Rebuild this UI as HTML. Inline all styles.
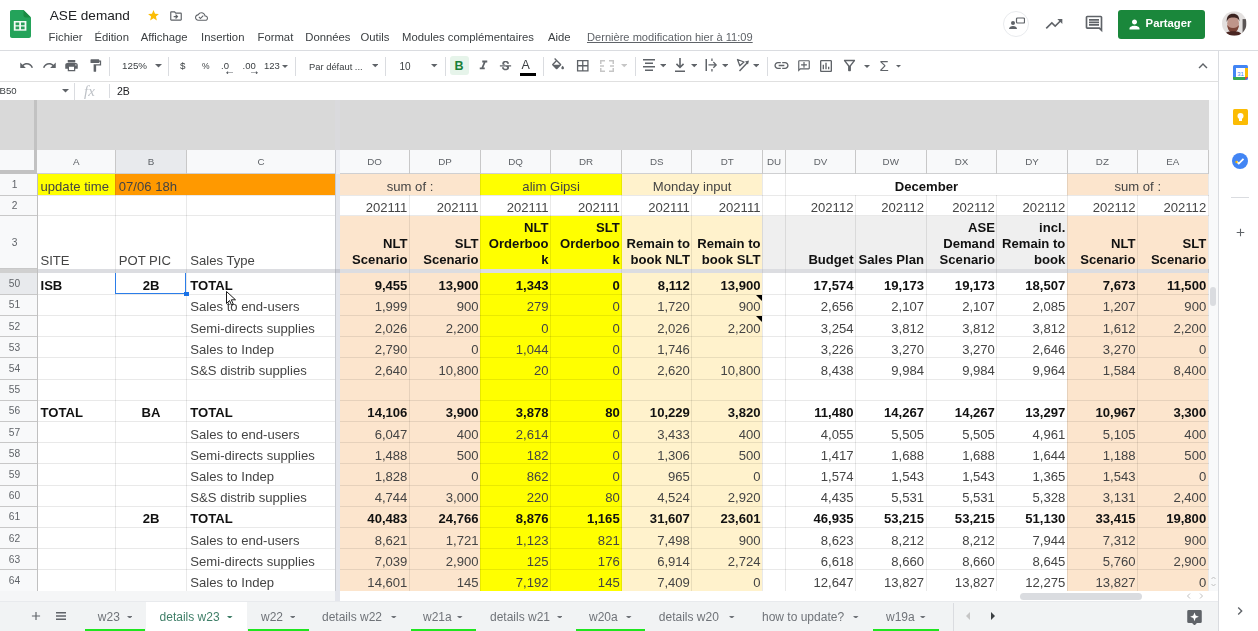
<!DOCTYPE html>
<html><head><meta charset="utf-8"><style>
html,body{margin:0;padding:0;}
body{filter:blur(0.5px);width:1258px;height:631px;overflow:hidden;position:relative;background:#fff;font-family:"Liberation Sans", sans-serif;}
.t{position:absolute;white-space:nowrap;}
.r{position:absolute;display:block;}
</style></head><body>
<svg class="r" style="left:10.00px;top:9.50px;" width="21" height="28" viewBox="0 0 21 28"><path d="M0 2C0 .9.9 0 2 0h11.5L21 7.5V26c0 1.1-.9 2-2 2H2c-1.1 0-2-.9-2-2z" fill="#24a35a"/><path d="M13.5 0L21 7.5h-5.5c-1.1 0-2-.9-2-2z" fill="#1b8a43"/><path d="M3.8 11h12.6v9.7H3.8z" fill="#f4fbf6"/><path d="M5.6 12.6h3.6v2.6H5.6zM11 12.6h3.6v2.6H11zM5.6 16.6h3.6v2.6H5.6zM11 16.6h3.6v2.6H11z" fill="#2a9d5a"/></svg>
<div class="t" style="left:49.80px;top:9.49px;font-size:13.6px;line-height:13.6px;color:#202124;font-weight:normal;">ASE demand</div>
<svg class="r" style="left:147.00px;top:9.00px;" width="13" height="13" viewBox="0 0 24 24"><path d="M12 17.27L18.18 21l-1.64-7.03L22 9.24l-7.19-.61L12 2 9.19 8.63 2 9.24l5.46 4.73L5.82 21z" fill="#fbbc04"/></svg>
<svg class="r" style="left:169.00px;top:9.00px;" width="14" height="14" viewBox="0 0 24 24"><path d="M20 6h-8l-2-2H4c-1.1 0-2 .9-2 2v12c0 1.1.9 2 2 2h16c1.1 0 2-.9 2-2V8c0-1.1-.9-2-2-2zm0 12H4V6h5.17l2 2H20v10zm-7.84-6H8v2h4.16l-1.59 1.59L11.99 17 16 13l-4.01-4-1.41 1.41z" fill="#5f6368"/></svg>
<svg class="r" style="left:194.50px;top:9.50px;" width="13" height="13" viewBox="0 0 24 24"><path d="M19.35 10.04C18.67 6.59 15.64 4 12 4 9.11 4 6.6 5.64 5.35 8.04 2.34 8.36 0 10.91 0 14c0 3.31 2.69 6 6 6h13c2.76 0 5-2.24 5-5 0-2.64-2.05-4.78-4.65-4.96zM19 18H6c-2.21 0-4-1.79-4-4 0-2.05 1.53-3.76 3.56-3.97l1.07-.11.5-.95C8.08 7.14 9.94 6 12 6c2.62 0 4.88 1.86 5.39 4.43l.3 1.5 1.53.11c1.56.1 2.78 1.41 2.78 2.96 0 1.65-1.35 3-3 3zm-9-3.82l-2.09-2.09L6.5 13.5 10 17l6.01-6.01-1.41-1.41z" fill="#5f6368"/></svg>
<div class="t" style="left:48.60px;top:32.03px;font-size:11.3px;line-height:11.3px;color:#3c4043;font-weight:normal;">Fichier</div>
<div class="t" style="left:94.40px;top:32.03px;font-size:11.3px;line-height:11.3px;color:#3c4043;font-weight:normal;">Édition</div>
<div class="t" style="left:140.70px;top:32.03px;font-size:11.3px;line-height:11.3px;color:#3c4043;font-weight:normal;">Affichage</div>
<div class="t" style="left:201.10px;top:32.03px;font-size:11.3px;line-height:11.3px;color:#3c4043;font-weight:normal;">Insertion</div>
<div class="t" style="left:257.50px;top:32.03px;font-size:11.3px;line-height:11.3px;color:#3c4043;font-weight:normal;">Format</div>
<div class="t" style="left:305.30px;top:32.03px;font-size:11.3px;line-height:11.3px;color:#3c4043;font-weight:normal;">Données</div>
<div class="t" style="left:360.50px;top:32.03px;font-size:11.3px;line-height:11.3px;color:#3c4043;font-weight:normal;">Outils</div>
<div class="t" style="left:402.00px;top:32.03px;font-size:11.3px;line-height:11.3px;color:#3c4043;font-weight:normal;">Modules complémentaires</div>
<div class="t" style="left:548.00px;top:32.03px;font-size:11.3px;line-height:11.3px;color:#3c4043;font-weight:normal;">Aide</div>
<div class="t" style="left:587.00px;top:32.20px;font-size:11.1px;line-height:11.1px;color:#5f6368;font-weight:normal;text-decoration:underline;">Dernière modification hier à 11:09</div>
<div class="r" style="left:1003px;top:10.5px;width:26px;height:26px;border-radius:50%;border:1px solid #e8eaed;box-sizing:border-box"></div>
<svg class="r" style="left:1009.00px;top:17.00px;" width="16" height="13" viewBox="0 0 16 13"><circle cx="4" cy="6" r="2" fill="#5f6368"/><path d="M0 12c0-2 2-3 4-3s4 1 4 3z" fill="#5f6368"/><rect x="7.5" y="1" width="8" height="5" rx="1" fill="none" stroke="#5f6368" stroke-width="1.2"/></svg>
<svg class="r" style="left:1044.00px;top:14.00px;" width="20" height="20" viewBox="0 0 24 24"><path d="M16 6l2.29 2.29-4.88 4.88-4-4L2 16.59 3.41 18l6-6 4 4 6.3-6.29L22 12V6z" fill="#5f6368"/></svg>
<svg class="r" style="left:1084.00px;top:14.00px;" width="20" height="20" viewBox="0 0 24 24"><path d="M21.99 4c0-1.1-.89-2-1.99-2H4c-1.1 0-2 .9-2 2v12c0 1.1.9 2 2 2h14l4 4-.01-18zM20 4v13.17L18.83 16H4V4h16zM6 12h12v2H6zm0-3h12v2H6zm0-3h12v2H6z" fill="#5f6368"/></svg>
<div class="r" style="left:1118.4px;top:10.2px;width:86.3px;height:28.6px;border-radius:4px;background:#1a873b;border-radius:3px"></div>
<svg class="r" style="left:1127.00px;top:17.00px;" width="15" height="15" viewBox="0 0 24 24"><path d="M12 12c2.21 0 4-1.79 4-4s-1.79-4-4-4-4 1.79-4 4 1.79 4 4 4zm0 2c-2.67 0-8 1.34-8 4v2h16v-2c0-2.66-5.33-4-8-4z" fill="#fff"/></svg>
<div class="t" style="left:1145.60px;top:18.43px;font-size:11.3px;line-height:11.3px;color:#ffffff;font-weight:bold;">Partager</div>
<svg class="r" style="left:1222.20px;top:11.00px;" width="24.5" height="25" viewBox="0 0 25 25"><defs><clipPath id="av"><circle cx="12.5" cy="12.5" r="12.5"/></clipPath></defs><g clip-path="url(#av)"><rect width="25" height="25" fill="#e3e0df"/><rect x="21" y="8" width="4" height="14" fill="#5b5555"/><ellipse cx="11.3" cy="12.5" rx="6" ry="8.5" fill="#bf958a"/><path d="M4.8 11c-.3-6 2.5-8.5 6.5-8.5s6.5 2 6.5 8c-.8-2.5-2.5-4-6.5-4S5.8 8 4.8 11z" fill="#3b2320"/><path d="M5.3 14c.5 5 3 8 6 8s5.5-3 6-8c-1.5 2-3 3-6 3s-4.5-1-6-3z" fill="#7a4438"/><path d="M2 25c1-3 4-4.5 9.5-4.5S19.5 22 21 25z" fill="#4a2622"/></g></svg>
<div class="r" style="left:0.00px;top:50.00px;width:1258.00px;height:1.00px;background:#dadce0;"></div>
<svg class="r" style="left:19.00px;top:58.00px;" width="15" height="15" viewBox="0 0 24 24"><path d="M12.5 8c-2.65 0-5.05.99-6.9 2.6L2 7v9h9l-3.62-3.62c1.39-1.16 3.16-1.88 5.12-1.88 3.54 0 6.55 2.31 7.6 5.5l2.37-.78C21.08 11.03 17.15 8 12.5 8z" fill="#5f6368"/></svg>
<svg class="r" style="left:42.00px;top:58.00px;" width="15" height="15" viewBox="0 0 24 24"><path d="M18.4 10.6C16.55 8.99 14.15 8 11.5 8c-4.65 0-8.58 3.03-9.96 7.22L3.9 16c1.05-3.19 4.05-5.5 7.6-5.5 1.95 0 3.73.72 5.12 1.88L13 16h9V7l-3.6 3.6z" fill="#5f6368"/></svg>
<svg class="r" style="left:64.00px;top:58.00px;" width="15" height="15" viewBox="0 0 24 24"><path d="M19 8H5c-1.66 0-3 1.34-3 3v6h4v4h12v-4h4v-6c0-1.66-1.34-3-3-3zm-3 11H8v-5h8v5zm3-7c-.55 0-1-.45-1-1s.45-1 1-1 1 .45 1 1-.45 1-1 1zm-1-9H6v4h12V3z" fill="#5f6368"/></svg>
<svg class="r" style="left:87.50px;top:58.00px;" width="15" height="15" viewBox="0 0 24 24"><path d="M18 4V3c0-.55-.45-1-1-1H5c-.55 0-1 .45-1 1v4c0 .55.45 1 1 1h12c.55 0 1-.45 1-1V6h1v4H9v11c0 .55.45 1 1 1h2c.55 0 1-.45 1-1v-9h8V4h-3z" fill="#5f6368"/></svg>
<div class="r" style="left:109.00px;top:57.00px;width:1.00px;height:19.00px;background:#dadce0;"></div>
<div class="t" style="left:122.00px;top:61.20px;font-size:9.8px;line-height:9.8px;color:#3c4043;font-weight:normal;">125%</div>
<svg class="r" style="left:154.50px;top:64.25px;" width="7" height="3.5" viewBox="0 0 10 5"><path d="M0 0l5 5 5-5z" fill="#5f6368"/></svg>
<div class="r" style="left:168.00px;top:57.00px;width:1.00px;height:19.00px;background:#dadce0;"></div>
<div class="t" style="left:180.00px;top:60.70px;font-size:9.8px;line-height:9.8px;color:#3c4043;font-weight:normal;">$</div>
<div class="t" style="left:202.00px;top:61.80px;font-size:8.5px;line-height:8.5px;color:#3c4043;font-weight:normal;">%</div>
<div class="t" style="left:221.00px;top:60.96px;font-size:9.5px;line-height:9.5px;color:#3c4043;font-weight:normal;">.0</div>
<svg class="r" style="left:226.00px;top:70.50px;" width="7" height="3.5" viewBox="0 0 10 5"><path d="M10 2H3V0L0 2.5 3 5V3h7z" fill="#5f6368"/></svg>
<div class="t" style="left:242.50px;top:60.96px;font-size:9.5px;line-height:9.5px;color:#3c4043;font-weight:normal;">.00</div>
<svg class="r" style="left:251.00px;top:70.50px;" width="7" height="3.5" viewBox="0 0 10 5"><path d="M0 2h7V0l3 2.5L7 5V3H0z" fill="#5f6368"/></svg>
<div class="t" style="left:264.00px;top:60.96px;font-size:9.5px;line-height:9.5px;color:#3c4043;font-weight:normal;">123</div>
<svg class="r" style="left:282.00px;top:64.50px;" width="6" height="3.0" viewBox="0 0 10 5"><path d="M0 0l5 5 5-5z" fill="#5f6368"/></svg>
<div class="r" style="left:295.00px;top:57.00px;width:1.00px;height:19.00px;background:#dadce0;"></div>
<div class="t" style="left:309.00px;top:62.04px;font-size:9.4px;line-height:9.4px;color:#3c4043;font-weight:normal;">Par défaut ...</div>
<svg class="r" style="left:371.75px;top:64.38px;" width="6.5" height="3.25" viewBox="0 0 10 5"><path d="M0 0l5 5 5-5z" fill="#5f6368"/></svg>
<div class="r" style="left:385.00px;top:57.00px;width:1.00px;height:19.00px;background:#dadce0;"></div>
<div class="t" style="left:399.40px;top:61.53px;font-size:10px;line-height:10px;color:#3c4043;font-weight:normal;">10</div>
<svg class="r" style="left:431.25px;top:64.38px;" width="6.5" height="3.25" viewBox="0 0 10 5"><path d="M0 0l5 5 5-5z" fill="#5f6368"/></svg>
<div class="r" style="left:445.00px;top:57.00px;width:1.00px;height:19.00px;background:#dadce0;"></div>
<div class="r" style="left:450.00px;top:56.00px;width:19.00px;height:19.00px;background:#e6f4ea;border-radius:3px;"></div>
<div class="t" style="left:454.50px;top:59.92px;font-size:12.5px;line-height:12.5px;color:#188038;font-weight:bold;">B</div>
<svg class="r" style="left:476.00px;top:58.00px;" width="15" height="15" viewBox="0 0 24 24"><path d="M10 4v3h2.21l-3.42 8H6v3h8v-3h-2.21l3.42-8H18V4z" fill="#5f6368"/></svg>
<svg class="r" style="left:498.00px;top:59.00px;" width="15" height="15" viewBox="0 0 24 24"><path d="M7.24 8.75c-.26-.48-.39-1.03-.39-1.67 0-.61.13-1.16.4-1.67.26-.5.63-.93 1.11-1.29.48-.35 1.05-.63 1.7-.83.66-.19 1.39-.29 2.18-.29.81 0 1.54.11 2.21.34.66.22 1.23.54 1.69.94.47.4.83.88 1.08 1.43.25.55.38 1.15.38 1.81h-3.01c0-.31-.05-.59-.15-.85-.09-.27-.24-.49-.44-.68-.2-.19-.45-.33-.75-.44-.3-.1-.66-.16-1.06-.16-.39 0-.74.04-1.03.13-.29.09-.53.21-.72.36-.19.16-.34.34-.44.55-.1.21-.15.43-.15.66 0 .48.25.88.74 1.21.38.25.77.48 1.41.7H7.39c-.05-.08-.11-.17-.15-.25zM21 12v-2H3v2h9.62c.18.07.4.14.55.2.37.17.66.34.87.51.21.17.35.36.43.57.07.2.11.43.11.69 0 .23-.05.45-.14.66-.09.2-.23.38-.42.53-.19.15-.42.26-.71.35-.29.08-.63.13-1.01.13-.43 0-.83-.04-1.18-.13s-.66-.23-.91-.42c-.25-.19-.45-.44-.59-.75-.14-.31-.25-.76-.25-1.21H6.4c0 .55.08 1.13.24 1.58.16.45.37.85.65 1.21.28.35.6.66.98.92.37.26.78.48 1.22.65.44.17.9.3 1.38.39.48.08.96.13 1.44.13.8 0 1.53-.09 2.18-.28s1.21-.45 1.67-.79c.46-.34.82-.77 1.07-1.27s.38-1.07.38-1.71c0-.6-.1-1.14-.31-1.61-.05-.11-.11-.23-.17-.33H21z" fill="#5f6368"/></svg>
<div class="t" style="left:521.50px;top:58.92px;font-size:12.5px;line-height:12.5px;color:#3c4043;font-weight:normal;">A</div>
<div class="r" style="left:520.00px;top:73.00px;width:16.00px;height:3.00px;background:#000000;"></div>
<div class="r" style="left:543.00px;top:57.00px;width:1.00px;height:19.00px;background:#dadce0;"></div>
<svg class="r" style="left:550.00px;top:58.00px;" width="16" height="16" viewBox="0 0 24 24"><path d="M16.56 8.94L7.62 0 6.21 1.41l2.38 2.38-5.15 5.15c-.59.59-.59 1.54 0 2.12l5.5 5.5c.29.29.68.44 1.06.44s.77-.15 1.06-.44l5.5-5.5c.59-.58.59-1.53 0-2.12zM5.21 10L10 5.21 14.79 10H5.21zM19 11.5s-2 2.17-2 3.5c0 1.1.9 2 2 2s2-.9 2-2c0-1.33-2-3.5-2-3.5z" fill="#5f6368"/></svg>
<svg class="r" style="left:575.00px;top:58.00px;" width="15.5" height="15.5" viewBox="0 0 24 24"><path d="M3 3v18h18V3H3zm8 16H5v-6h6v6zm0-8H5V5h6v6zm8 8h-6v-6h6v6zm0-8h-6V5h6v6z" fill="#5f6368"/></svg>
<svg class="r" style="left:600.00px;top:60.00px;" width="14" height="12" viewBox="0 0 14 12"><path d="M0 0h5v1.5H1.5V4H0zM9 0h5v4h-1.5V1.5H9zM0 8h1.5v2.5H5V12H0zM12.5 8H14v4H9v-1.5h3.5zM0 5.3h4v1.4H0zM10 5.3h4v1.4h-4z" fill="#c6c6c6"/></svg>
<svg class="r" style="left:620.75px;top:64.38px;" width="6.5" height="3.25" viewBox="0 0 10 5"><path d="M0 0l5 5 5-5z" fill="#c6c6c6"/></svg>
<div class="r" style="left:635.00px;top:57.00px;width:1.00px;height:19.00px;background:#dadce0;"></div>
<svg class="r" style="left:643.00px;top:59.00px;" width="12" height="12" viewBox="0 0 12 12"><path d="M0 0h12v1.6H0zM2 3.5h8v1.6H2zM0 7h12v1.6H0zM2 10.4h8V12H2z" fill="#5f6368"/></svg>
<svg class="r" style="left:659.75px;top:64.38px;" width="6.5" height="3.25" viewBox="0 0 10 5"><path d="M0 0l5 5 5-5z" fill="#5f6368"/></svg>
<svg class="r" style="left:675.00px;top:58.00px;" width="10" height="14" viewBox="0 0 10 14"><path d="M4.2 0h1.6v7.5L8 5.3l1.1 1.1L5 10.5.9 6.4 2 5.3l2.2 2.2zM0 12.4h10V14H0z" fill="#5f6368"/></svg>
<svg class="r" style="left:690.75px;top:64.38px;" width="6.5" height="3.25" viewBox="0 0 10 5"><path d="M0 0l5 5 5-5z" fill="#5f6368"/></svg>
<svg class="r" style="left:705.00px;top:58.00px;" width="13" height="14" viewBox="0 0 13 14"><path d="M0.5 1h1.5v12H0.5zM6.3 0.5h1.3v2.5H6.3zM6.3 11h1.3v2.5H6.3zM3.5 6.3h6.2l-1.8-1.8.9-.9 3.3 3.3-3.3 3.3-.9-.9 1.8-1.8H3.5z" fill="#5f6368"/></svg>
<svg class="r" style="left:721.75px;top:64.38px;" width="6.5" height="3.25" viewBox="0 0 10 5"><path d="M0 0l5 5 5-5z" fill="#5f6368"/></svg>
<svg class="r" style="left:736.00px;top:58.00px;" width="14" height="14" viewBox="0 0 14 14"><path d="M1.5 1.5L8 4 3.8 7.8z" fill="none" stroke="#5f6368" stroke-width="1.3" stroke-linejoin="round"/><path d="M3.5 13L11.5 4.5" stroke="#5f6368" stroke-width="1.4"/><path d="M9 3.5l4-1-1 4z" fill="#5f6368"/></svg>
<svg class="r" style="left:752.75px;top:64.38px;" width="6.5" height="3.25" viewBox="0 0 10 5"><path d="M0 0l5 5 5-5z" fill="#5f6368"/></svg>
<div class="r" style="left:767.00px;top:57.00px;width:1.00px;height:19.00px;background:#dadce0;"></div>
<svg class="r" style="left:773.00px;top:57.00px;" width="17" height="17" viewBox="0 0 24 24"><path d="M3.9 12c0-1.71 1.39-3.1 3.1-3.1h4V7H7c-2.76 0-5 2.24-5 5s2.24 5 5 5h4v-1.9H7c-1.71 0-3.1-1.39-3.1-3.1zM8 13h8v-2H8v2zm9-6h-4v1.9h4c1.71 0 3.1 1.39 3.1 3.1s-1.39 3.1-3.1 3.1h-4V17h4c2.76 0 5-2.24 5-5s-2.24-5-5-5z" fill="#5f6368"/></svg>
<svg class="r" style="left:797.00px;top:58.50px;" width="14" height="14" viewBox="0 0 24 24"><g transform="translate(24 0) scale(-1 1)"><path d="M21.99 4c0-1.1-.89-2-1.99-2H4c-1.1 0-2 .9-2 2v12c0 1.1.9 2 2 2h14l4 4-.01-18zM20 4v13.17L18.83 16H4V4h16zM13 5h-2v4H7v2h4v4h2v-4h4V9h-4z" fill="#5f6368"/></g></svg>
<svg class="r" style="left:818.00px;top:58.00px;" width="16" height="16" viewBox="0 0 24 24"><path d="M19 3H5c-1.1 0-2 .9-2 2v14c0 1.1.9 2 2 2h14c1.1 0 2-.9 2-2V5c0-1.1-.9-2-2-2zm0 16H5V5h14v14zM7 10h2v7H7zm4-3h2v10h-2zm4 6h2v4h-2z" fill="#5f6368"/></svg>
<svg class="r" style="left:841.00px;top:57.00px;" width="17" height="17" viewBox="0 0 24 24"><path d="M7 6h10l-5.01 6.3L7 6zm-2.75-.39C6.27 8.2 10 13 10 13v6c0 .55.45 1 1 1h2c.55 0 1-.45 1-1v-6s3.72-4.8 5.74-7.39c.51-.66.04-1.61-.79-1.61H5.04c-.83 0-1.3.95-.79 1.61z" fill="#5f6368"/></svg>
<svg class="r" style="left:864.00px;top:64.50px;" width="6" height="3.0" viewBox="0 0 10 5"><path d="M0 0l5 5 5-5z" fill="#5f6368"/></svg>
<div class="t" style="left:879.50px;top:58.30px;font-size:15px;line-height:15px;color:#5f6368;font-weight:normal;">Σ</div>
<svg class="r" style="left:895.50px;top:65.25px;" width="5" height="2.5" viewBox="0 0 10 5"><path d="M0 0l5 5 5-5z" fill="#5f6368"/></svg>
<svg class="r" style="left:1194.00px;top:57.00px;" width="18" height="18" viewBox="0 0 24 24"><path d="M12 8l-6 6 1.41 1.41L12 10.83l4.59 4.58L18 14z" fill="#5f6368"/></svg>
<div class="r" style="left:0.00px;top:81.00px;width:1218.00px;height:1.00px;background:#e0e0e0;"></div>
<div class="t" style="left:-0.50px;top:86.17px;font-size:9.6px;line-height:9.6px;color:#3c4043;font-weight:normal;">B50</div>
<svg class="r" style="left:62.10px;top:89.25px;" width="7" height="3.5" viewBox="0 0 10 5"><path d="M0 0l5 5 5-5z" fill="#5f6368"/></svg>
<div class="r" style="left:74.00px;top:83.00px;width:1.00px;height:17.00px;background:#dadce0;"></div>
<div class="t" style="left:84.00px;top:83.80px;font-size:15px;line-height:15px;color:#bdc1c6;font-weight:normal;font-family:'Liberation Serif',serif;font-style:italic;">fx</div>
<div class="r" style="left:109.00px;top:84.00px;width:1.00px;height:14.00px;background:#dadce0;"></div>
<div class="t" style="left:117.00px;top:86.11px;font-size:10.5px;line-height:10.5px;color:#202124;font-weight:normal;">2B</div>
<div class="r" style="left:1218.00px;top:51.00px;width:1.00px;height:580.00px;background:#dadce0;"></div>
<svg class="r" style="left:1233.00px;top:65.00px;" width="15" height="15" viewBox="0 0 15 15"><rect width="15" height="15" rx="1.5" fill="#4285f4"/><rect x="3" y="3" width="9" height="9" fill="#fff"/><path d="M0 12h12v3H1.5A1.5 1.5 0 0 1 0 13.5z" fill="#34a853"/><path d="M12 3h3v9h-3z" fill="#fbbc04"/><path d="M12 12h3l-3 3z" fill="#ea4335"/><text x="7.5" y="10.5" font-size="6" text-anchor="middle" fill="#4285f4" font-family="Liberation Sans">31</text></svg>
<svg class="r" style="left:1233.00px;top:109.00px;" width="15" height="16" viewBox="0 0 15 16"><rect width="15" height="16" rx="1.5" fill="#fbbc04"/><circle cx="7.5" cy="7" r="3" fill="#fff"/><rect x="6" y="9" width="3" height="3" fill="#fff"/></svg>
<svg class="r" style="left:1232.00px;top:153.00px;" width="16" height="16" viewBox="0 0 16 16"><circle cx="8" cy="8" r="8" fill="#4285f4"/><path d="M4.5 8.3l2.3 2.3 4.7-4.7" stroke="#fff" stroke-width="1.8" fill="none"/><circle cx="4.5" cy="9" r="1.2" fill="#fbbc04"/></svg>
<div class="r" style="left:1231.00px;top:197.00px;width:18.00px;height:1.00px;background:#dadce0;"></div>
<svg class="r" style="left:1234.00px;top:226.00px;" width="13" height="13" viewBox="0 0 24 24"><path d="M19 13h-6v6h-2v-6H5v-2h6V5h2v6h6v2z" fill="#5f6368"/></svg>
<svg class="r" style="left:1232.00px;top:603.00px;" width="16" height="16" viewBox="0 0 24 24"><path d="M10 6L8.59 7.41 13.17 12l-4.58 4.59L10 18l6-6z" fill="#5f6368"/></svg>
<div class="r" style="left:0.00px;top:100.00px;width:1209.00px;height:50.00px;background:#d9d9d9;"></div>
<div class="r" style="left:1209.00px;top:100.00px;width:9.00px;height:491.00px;background:#f8f9fa;"></div>
<div class="r" style="left:37.00px;top:174.00px;width:1172.00px;height:417.00px;background:#ffffff;"></div>
<div class="r" style="left:37.00px;top:174.00px;width:78.00px;height:21.00px;background:#ffff00;"></div>
<div class="r" style="left:115.00px;top:174.00px;width:220.00px;height:21.00px;background:#ff9900;"></div>
<div class="r" style="left:340.00px;top:174.00px;width:140.00px;height:21.00px;background:#fce5cd;"></div>
<div class="r" style="left:480.00px;top:174.00px;width:142.00px;height:21.00px;background:#ffff00;"></div>
<div class="r" style="left:622.00px;top:174.00px;width:140.00px;height:21.00px;background:#fff2cc;"></div>
<div class="r" style="left:1067.00px;top:174.00px;width:141.00px;height:21.00px;background:#fce5cd;"></div>
<div class="r" style="left:340.00px;top:216.00px;width:140.00px;height:53.00px;background:#fce5cd;"></div>
<div class="r" style="left:480.00px;top:216.00px;width:142.00px;height:53.00px;background:#ffff00;"></div>
<div class="r" style="left:622.00px;top:216.00px;width:140.00px;height:53.00px;background:#fff2cc;"></div>
<div class="r" style="left:762.00px;top:216.00px;width:305.00px;height:53.00px;background:#efefef;"></div>
<div class="r" style="left:1067.00px;top:216.00px;width:141.00px;height:53.00px;background:#fce5cd;"></div>
<div class="r" style="left:340.00px;top:273.00px;width:140.00px;height:21.00px;background:#fce5cd;"></div>
<div class="r" style="left:480.00px;top:273.00px;width:142.00px;height:21.00px;background:#ffff00;"></div>
<div class="r" style="left:622.00px;top:273.00px;width:140.00px;height:21.00px;background:#fff2cc;"></div>
<div class="r" style="left:1067.00px;top:273.00px;width:141.00px;height:21.00px;background:#fce5cd;"></div>
<div class="r" style="left:340.00px;top:294.00px;width:140.00px;height:21.00px;background:#fce5cd;"></div>
<div class="r" style="left:480.00px;top:294.00px;width:142.00px;height:21.00px;background:#ffff00;"></div>
<div class="r" style="left:622.00px;top:294.00px;width:140.00px;height:21.00px;background:#fff2cc;"></div>
<div class="r" style="left:1067.00px;top:294.00px;width:141.00px;height:21.00px;background:#fce5cd;"></div>
<div class="r" style="left:340.00px;top:315.00px;width:140.00px;height:22.00px;background:#fce5cd;"></div>
<div class="r" style="left:480.00px;top:315.00px;width:142.00px;height:22.00px;background:#ffff00;"></div>
<div class="r" style="left:622.00px;top:315.00px;width:140.00px;height:22.00px;background:#fff2cc;"></div>
<div class="r" style="left:1067.00px;top:315.00px;width:141.00px;height:22.00px;background:#fce5cd;"></div>
<div class="r" style="left:340.00px;top:337.00px;width:140.00px;height:21.00px;background:#fce5cd;"></div>
<div class="r" style="left:480.00px;top:337.00px;width:142.00px;height:21.00px;background:#ffff00;"></div>
<div class="r" style="left:622.00px;top:337.00px;width:140.00px;height:21.00px;background:#fff2cc;"></div>
<div class="r" style="left:1067.00px;top:337.00px;width:141.00px;height:21.00px;background:#fce5cd;"></div>
<div class="r" style="left:340.00px;top:358.00px;width:140.00px;height:21.00px;background:#fce5cd;"></div>
<div class="r" style="left:480.00px;top:358.00px;width:142.00px;height:21.00px;background:#ffff00;"></div>
<div class="r" style="left:622.00px;top:358.00px;width:140.00px;height:21.00px;background:#fff2cc;"></div>
<div class="r" style="left:1067.00px;top:358.00px;width:141.00px;height:21.00px;background:#fce5cd;"></div>
<div class="r" style="left:340.00px;top:379.00px;width:140.00px;height:21.00px;background:#fce5cd;"></div>
<div class="r" style="left:480.00px;top:379.00px;width:142.00px;height:21.00px;background:#ffff00;"></div>
<div class="r" style="left:622.00px;top:379.00px;width:140.00px;height:21.00px;background:#fff2cc;"></div>
<div class="r" style="left:1067.00px;top:379.00px;width:141.00px;height:21.00px;background:#fce5cd;"></div>
<div class="r" style="left:340.00px;top:400.00px;width:140.00px;height:21.00px;background:#fce5cd;"></div>
<div class="r" style="left:480.00px;top:400.00px;width:142.00px;height:21.00px;background:#ffff00;"></div>
<div class="r" style="left:622.00px;top:400.00px;width:140.00px;height:21.00px;background:#fff2cc;"></div>
<div class="r" style="left:1067.00px;top:400.00px;width:141.00px;height:21.00px;background:#fce5cd;"></div>
<div class="r" style="left:340.00px;top:421.00px;width:140.00px;height:22.00px;background:#fce5cd;"></div>
<div class="r" style="left:480.00px;top:421.00px;width:142.00px;height:22.00px;background:#ffff00;"></div>
<div class="r" style="left:622.00px;top:421.00px;width:140.00px;height:22.00px;background:#fff2cc;"></div>
<div class="r" style="left:1067.00px;top:421.00px;width:141.00px;height:22.00px;background:#fce5cd;"></div>
<div class="r" style="left:340.00px;top:443.00px;width:140.00px;height:21.00px;background:#fce5cd;"></div>
<div class="r" style="left:480.00px;top:443.00px;width:142.00px;height:21.00px;background:#ffff00;"></div>
<div class="r" style="left:622.00px;top:443.00px;width:140.00px;height:21.00px;background:#fff2cc;"></div>
<div class="r" style="left:1067.00px;top:443.00px;width:141.00px;height:21.00px;background:#fce5cd;"></div>
<div class="r" style="left:340.00px;top:464.00px;width:140.00px;height:21.00px;background:#fce5cd;"></div>
<div class="r" style="left:480.00px;top:464.00px;width:142.00px;height:21.00px;background:#ffff00;"></div>
<div class="r" style="left:622.00px;top:464.00px;width:140.00px;height:21.00px;background:#fff2cc;"></div>
<div class="r" style="left:1067.00px;top:464.00px;width:141.00px;height:21.00px;background:#fce5cd;"></div>
<div class="r" style="left:340.00px;top:485.00px;width:140.00px;height:21.00px;background:#fce5cd;"></div>
<div class="r" style="left:480.00px;top:485.00px;width:142.00px;height:21.00px;background:#ffff00;"></div>
<div class="r" style="left:622.00px;top:485.00px;width:140.00px;height:21.00px;background:#fff2cc;"></div>
<div class="r" style="left:1067.00px;top:485.00px;width:141.00px;height:21.00px;background:#fce5cd;"></div>
<div class="r" style="left:340.00px;top:506.00px;width:140.00px;height:21.00px;background:#fce5cd;"></div>
<div class="r" style="left:480.00px;top:506.00px;width:142.00px;height:21.00px;background:#ffff00;"></div>
<div class="r" style="left:622.00px;top:506.00px;width:140.00px;height:21.00px;background:#fff2cc;"></div>
<div class="r" style="left:1067.00px;top:506.00px;width:141.00px;height:21.00px;background:#fce5cd;"></div>
<div class="r" style="left:340.00px;top:527.00px;width:140.00px;height:22.00px;background:#fce5cd;"></div>
<div class="r" style="left:480.00px;top:527.00px;width:142.00px;height:22.00px;background:#ffff00;"></div>
<div class="r" style="left:622.00px;top:527.00px;width:140.00px;height:22.00px;background:#fff2cc;"></div>
<div class="r" style="left:1067.00px;top:527.00px;width:141.00px;height:22.00px;background:#fce5cd;"></div>
<div class="r" style="left:340.00px;top:549.00px;width:140.00px;height:21.00px;background:#fce5cd;"></div>
<div class="r" style="left:480.00px;top:549.00px;width:142.00px;height:21.00px;background:#ffff00;"></div>
<div class="r" style="left:622.00px;top:549.00px;width:140.00px;height:21.00px;background:#fff2cc;"></div>
<div class="r" style="left:1067.00px;top:549.00px;width:141.00px;height:21.00px;background:#fce5cd;"></div>
<div class="r" style="left:340.00px;top:570.00px;width:140.00px;height:21.00px;background:#fce5cd;"></div>
<div class="r" style="left:480.00px;top:570.00px;width:142.00px;height:21.00px;background:#ffff00;"></div>
<div class="r" style="left:622.00px;top:570.00px;width:140.00px;height:21.00px;background:#fff2cc;"></div>
<div class="r" style="left:1067.00px;top:570.00px;width:141.00px;height:21.00px;background:#fce5cd;"></div>
<div class="r" style="left:37.00px;top:194.90px;width:1172.00px;height:1.00px;background:rgba(0,0,0,0.085);"></div>
<div class="r" style="left:37.00px;top:215.40px;width:1172.00px;height:1.00px;background:rgba(0,0,0,0.085);"></div>
<div class="r" style="left:37.00px;top:293.70px;width:1172.00px;height:1.00px;background:rgba(0,0,0,0.085);"></div>
<div class="r" style="left:37.00px;top:314.90px;width:1172.00px;height:1.00px;background:rgba(0,0,0,0.085);"></div>
<div class="r" style="left:37.00px;top:336.10px;width:1172.00px;height:1.00px;background:rgba(0,0,0,0.085);"></div>
<div class="r" style="left:37.00px;top:357.30px;width:1172.00px;height:1.00px;background:rgba(0,0,0,0.085);"></div>
<div class="r" style="left:37.00px;top:378.50px;width:1172.00px;height:1.00px;background:rgba(0,0,0,0.085);"></div>
<div class="r" style="left:37.00px;top:399.70px;width:1172.00px;height:1.00px;background:rgba(0,0,0,0.085);"></div>
<div class="r" style="left:37.00px;top:420.90px;width:1172.00px;height:1.00px;background:rgba(0,0,0,0.085);"></div>
<div class="r" style="left:37.00px;top:442.10px;width:1172.00px;height:1.00px;background:rgba(0,0,0,0.085);"></div>
<div class="r" style="left:37.00px;top:463.30px;width:1172.00px;height:1.00px;background:rgba(0,0,0,0.085);"></div>
<div class="r" style="left:37.00px;top:484.50px;width:1172.00px;height:1.00px;background:rgba(0,0,0,0.085);"></div>
<div class="r" style="left:37.00px;top:505.70px;width:1172.00px;height:1.00px;background:rgba(0,0,0,0.085);"></div>
<div class="r" style="left:37.00px;top:526.90px;width:1172.00px;height:1.00px;background:rgba(0,0,0,0.085);"></div>
<div class="r" style="left:37.00px;top:548.10px;width:1172.00px;height:1.00px;background:rgba(0,0,0,0.085);"></div>
<div class="r" style="left:37.00px;top:569.30px;width:1172.00px;height:1.00px;background:rgba(0,0,0,0.085);"></div>
<div class="r" style="left:37.00px;top:590.50px;width:1172.00px;height:1.00px;background:rgba(0,0,0,0.085);"></div>
<div class="r" style="left:114.80px;top:173.70px;width:1.00px;height:417.30px;background:rgba(0,0,0,0.085);"></div>
<div class="r" style="left:186.30px;top:195.40px;width:1.00px;height:395.60px;background:rgba(0,0,0,0.085);"></div>
<div class="r" style="left:408.90px;top:195.40px;width:1.00px;height:395.60px;background:rgba(0,0,0,0.085);"></div>
<div class="r" style="left:480.00px;top:173.70px;width:1.00px;height:417.30px;background:rgba(0,0,0,0.085);"></div>
<div class="r" style="left:550.00px;top:195.40px;width:1.00px;height:395.60px;background:rgba(0,0,0,0.085);"></div>
<div class="r" style="left:621.20px;top:173.70px;width:1.00px;height:417.30px;background:rgba(0,0,0,0.085);"></div>
<div class="r" style="left:691.40px;top:195.40px;width:1.00px;height:395.60px;background:rgba(0,0,0,0.085);"></div>
<div class="r" style="left:762.00px;top:173.70px;width:1.00px;height:417.30px;background:rgba(0,0,0,0.085);"></div>
<div class="r" style="left:785.00px;top:173.70px;width:1.00px;height:417.30px;background:rgba(0,0,0,0.085);"></div>
<div class="r" style="left:855.00px;top:195.40px;width:1.00px;height:395.60px;background:rgba(0,0,0,0.085);"></div>
<div class="r" style="left:925.50px;top:195.40px;width:1.00px;height:395.60px;background:rgba(0,0,0,0.085);"></div>
<div class="r" style="left:996.40px;top:195.40px;width:1.00px;height:395.60px;background:rgba(0,0,0,0.085);"></div>
<div class="r" style="left:1066.80px;top:173.70px;width:1.00px;height:417.30px;background:rgba(0,0,0,0.085);"></div>
<div class="r" style="left:1137.00px;top:195.40px;width:1.00px;height:395.60px;background:rgba(0,0,0,0.085);"></div>
<div class="r" style="left:1207.70px;top:173.70px;width:1.00px;height:417.30px;background:rgba(0,0,0,0.085);"></div>
<div class="r" style="left:335.00px;top:100.00px;width:5.00px;height:50.00px;background:#dadadd;"></div>
<div class="r" style="left:335.00px;top:174.00px;width:5.00px;height:417.00px;background:#e4e6ec;"></div>
<div class="r" style="left:335.30px;top:173.70px;width:1.00px;height:417.30px;background:#c9cbd0;"></div>
<div class="r" style="left:37.00px;top:269.00px;width:1172.00px;height:4.00px;background:rgba(150,152,165,0.33);"></div>
<div class="r" style="left:37.00px;top:150.00px;width:1172.00px;height:24.00px;background:#f8f9fa;"></div>
<div class="r" style="left:115.00px;top:150.00px;width:72.00px;height:24.00px;background:#e8eaed;"></div>
<div class="r" style="left:37.00px;top:172.70px;width:1172.00px;height:1.00px;background:#cfd0d2;"></div>
<div class="r" style="left:114.80px;top:150.20px;width:1.00px;height:23.50px;background:#c8c8c8;"></div>
<div class="t" style="left:-323.85px;width:800px;text-align:center;top:157.30px;font-size:9.8px;line-height:9.8px;color:#5f6368;font-weight:normal;">A</div>
<div class="r" style="left:186.30px;top:150.20px;width:1.00px;height:23.50px;background:#c8c8c8;"></div>
<div class="t" style="left:-248.95px;width:800px;text-align:center;top:157.30px;font-size:9.8px;line-height:9.8px;color:#5f6368;font-weight:normal;">B</div>
<div class="t" style="left:-138.95px;width:800px;text-align:center;top:157.30px;font-size:9.8px;line-height:9.8px;color:#5f6368;font-weight:normal;">C</div>
<div class="r" style="left:408.90px;top:150.20px;width:1.00px;height:23.50px;background:#c8c8c8;"></div>
<div class="t" style="left:-25.50px;width:800px;text-align:center;top:157.30px;font-size:9.8px;line-height:9.8px;color:#5f6368;font-weight:normal;">DO</div>
<div class="r" style="left:480.00px;top:150.20px;width:1.00px;height:23.50px;background:#c8c8c8;"></div>
<div class="t" style="left:44.95px;width:800px;text-align:center;top:157.30px;font-size:9.8px;line-height:9.8px;color:#5f6368;font-weight:normal;">DP</div>
<div class="r" style="left:550.00px;top:150.20px;width:1.00px;height:23.50px;background:#c8c8c8;"></div>
<div class="t" style="left:115.50px;width:800px;text-align:center;top:157.30px;font-size:9.8px;line-height:9.8px;color:#5f6368;font-weight:normal;">DQ</div>
<div class="r" style="left:621.20px;top:150.20px;width:1.00px;height:23.50px;background:#c8c8c8;"></div>
<div class="t" style="left:186.10px;width:800px;text-align:center;top:157.30px;font-size:9.8px;line-height:9.8px;color:#5f6368;font-weight:normal;">DR</div>
<div class="r" style="left:691.40px;top:150.20px;width:1.00px;height:23.50px;background:#c8c8c8;"></div>
<div class="t" style="left:256.80px;width:800px;text-align:center;top:157.30px;font-size:9.8px;line-height:9.8px;color:#5f6368;font-weight:normal;">DS</div>
<div class="r" style="left:762.00px;top:150.20px;width:1.00px;height:23.50px;background:#c8c8c8;"></div>
<div class="t" style="left:327.20px;width:800px;text-align:center;top:157.30px;font-size:9.8px;line-height:9.8px;color:#5f6368;font-weight:normal;">DT</div>
<div class="r" style="left:785.00px;top:150.20px;width:1.00px;height:23.50px;background:#c8c8c8;"></div>
<div class="t" style="left:374.00px;width:800px;text-align:center;top:157.30px;font-size:9.8px;line-height:9.8px;color:#5f6368;font-weight:normal;">DU</div>
<div class="r" style="left:855.00px;top:150.20px;width:1.00px;height:23.50px;background:#c8c8c8;"></div>
<div class="t" style="left:420.50px;width:800px;text-align:center;top:157.30px;font-size:9.8px;line-height:9.8px;color:#5f6368;font-weight:normal;">DV</div>
<div class="r" style="left:925.50px;top:150.20px;width:1.00px;height:23.50px;background:#c8c8c8;"></div>
<div class="t" style="left:490.75px;width:800px;text-align:center;top:157.30px;font-size:9.8px;line-height:9.8px;color:#5f6368;font-weight:normal;">DW</div>
<div class="r" style="left:996.40px;top:150.20px;width:1.00px;height:23.50px;background:#c8c8c8;"></div>
<div class="t" style="left:561.45px;width:800px;text-align:center;top:157.30px;font-size:9.8px;line-height:9.8px;color:#5f6368;font-weight:normal;">DX</div>
<div class="r" style="left:1066.80px;top:150.20px;width:1.00px;height:23.50px;background:#c8c8c8;"></div>
<div class="t" style="left:632.10px;width:800px;text-align:center;top:157.30px;font-size:9.8px;line-height:9.8px;color:#5f6368;font-weight:normal;">DY</div>
<div class="r" style="left:1137.00px;top:150.20px;width:1.00px;height:23.50px;background:#c8c8c8;"></div>
<div class="t" style="left:702.40px;width:800px;text-align:center;top:157.30px;font-size:9.8px;line-height:9.8px;color:#5f6368;font-weight:normal;">DZ</div>
<div class="r" style="left:1207.70px;top:150.20px;width:1.00px;height:23.50px;background:#c8c8c8;"></div>
<div class="t" style="left:772.85px;width:800px;text-align:center;top:157.30px;font-size:9.8px;line-height:9.8px;color:#5f6368;font-weight:normal;">EA</div>
<div class="r" style="left:335.00px;top:150.00px;width:5.00px;height:24.00px;background:#eceef3;"></div>
<div class="r" style="left:335.30px;top:150.20px;width:1.00px;height:23.50px;background:#c9cbd0;"></div>
<div class="r" style="left:0.00px;top:174.00px;width:37.00px;height:417.00px;background:#f8f9fa;"></div>
<div class="r" style="left:0.00px;top:150.00px;width:34.00px;height:20.00px;background:#f8f9fa;"></div>
<div class="r" style="left:0.00px;top:273.00px;width:37.00px;height:21.00px;background:#e8eaed;"></div>
<div class="r" style="left:0.00px;top:194.90px;width:37.00px;height:1.00px;background:#c8c8c8;"></div>
<div class="t" style="left:-385.50px;width:800px;text-align:center;top:180.22px;font-size:10.2px;line-height:10.2px;color:#5f6368;font-weight:normal;">1</div>
<div class="r" style="left:0.00px;top:215.40px;width:37.00px;height:1.00px;background:#c8c8c8;"></div>
<div class="t" style="left:-385.50px;width:800px;text-align:center;top:201.32px;font-size:10.2px;line-height:10.2px;color:#5f6368;font-weight:normal;">2</div>
<div class="r" style="left:0.00px;top:268.40px;width:37.00px;height:1.00px;background:#c8c8c8;"></div>
<div class="t" style="left:-385.50px;width:800px;text-align:center;top:238.07px;font-size:10.2px;line-height:10.2px;color:#5f6368;font-weight:normal;">3</div>
<div class="r" style="left:0.00px;top:293.70px;width:37.00px;height:1.00px;background:#c8c8c8;"></div>
<div class="t" style="left:-385.50px;width:800px;text-align:center;top:279.27px;font-size:10.2px;line-height:10.2px;color:#5f6368;font-weight:normal;">50</div>
<div class="r" style="left:0.00px;top:314.90px;width:37.00px;height:1.00px;background:#c8c8c8;"></div>
<div class="t" style="left:-385.50px;width:800px;text-align:center;top:300.47px;font-size:10.2px;line-height:10.2px;color:#5f6368;font-weight:normal;">51</div>
<div class="r" style="left:0.00px;top:336.10px;width:37.00px;height:1.00px;background:#c8c8c8;"></div>
<div class="t" style="left:-385.50px;width:800px;text-align:center;top:321.67px;font-size:10.2px;line-height:10.2px;color:#5f6368;font-weight:normal;">52</div>
<div class="r" style="left:0.00px;top:357.30px;width:37.00px;height:1.00px;background:#c8c8c8;"></div>
<div class="t" style="left:-385.50px;width:800px;text-align:center;top:342.87px;font-size:10.2px;line-height:10.2px;color:#5f6368;font-weight:normal;">53</div>
<div class="r" style="left:0.00px;top:378.50px;width:37.00px;height:1.00px;background:#c8c8c8;"></div>
<div class="t" style="left:-385.50px;width:800px;text-align:center;top:364.07px;font-size:10.2px;line-height:10.2px;color:#5f6368;font-weight:normal;">54</div>
<div class="r" style="left:0.00px;top:399.70px;width:37.00px;height:1.00px;background:#c8c8c8;"></div>
<div class="t" style="left:-385.50px;width:800px;text-align:center;top:385.27px;font-size:10.2px;line-height:10.2px;color:#5f6368;font-weight:normal;">55</div>
<div class="r" style="left:0.00px;top:420.90px;width:37.00px;height:1.00px;background:#c8c8c8;"></div>
<div class="t" style="left:-385.50px;width:800px;text-align:center;top:406.47px;font-size:10.2px;line-height:10.2px;color:#5f6368;font-weight:normal;">56</div>
<div class="r" style="left:0.00px;top:442.10px;width:37.00px;height:1.00px;background:#c8c8c8;"></div>
<div class="t" style="left:-385.50px;width:800px;text-align:center;top:427.67px;font-size:10.2px;line-height:10.2px;color:#5f6368;font-weight:normal;">57</div>
<div class="r" style="left:0.00px;top:463.30px;width:37.00px;height:1.00px;background:#c8c8c8;"></div>
<div class="t" style="left:-385.50px;width:800px;text-align:center;top:448.87px;font-size:10.2px;line-height:10.2px;color:#5f6368;font-weight:normal;">58</div>
<div class="r" style="left:0.00px;top:484.50px;width:37.00px;height:1.00px;background:#c8c8c8;"></div>
<div class="t" style="left:-385.50px;width:800px;text-align:center;top:470.07px;font-size:10.2px;line-height:10.2px;color:#5f6368;font-weight:normal;">59</div>
<div class="r" style="left:0.00px;top:505.70px;width:37.00px;height:1.00px;background:#c8c8c8;"></div>
<div class="t" style="left:-385.50px;width:800px;text-align:center;top:491.27px;font-size:10.2px;line-height:10.2px;color:#5f6368;font-weight:normal;">60</div>
<div class="r" style="left:0.00px;top:526.90px;width:37.00px;height:1.00px;background:#c8c8c8;"></div>
<div class="t" style="left:-385.50px;width:800px;text-align:center;top:512.47px;font-size:10.2px;line-height:10.2px;color:#5f6368;font-weight:normal;">61</div>
<div class="r" style="left:0.00px;top:548.10px;width:37.00px;height:1.00px;background:#c8c8c8;"></div>
<div class="t" style="left:-385.50px;width:800px;text-align:center;top:533.67px;font-size:10.2px;line-height:10.2px;color:#5f6368;font-weight:normal;">62</div>
<div class="r" style="left:0.00px;top:569.30px;width:37.00px;height:1.00px;background:#c8c8c8;"></div>
<div class="t" style="left:-385.50px;width:800px;text-align:center;top:554.87px;font-size:10.2px;line-height:10.2px;color:#5f6368;font-weight:normal;">63</div>
<div class="r" style="left:0.00px;top:590.50px;width:37.00px;height:1.00px;background:#c8c8c8;"></div>
<div class="t" style="left:-385.50px;width:800px;text-align:center;top:576.07px;font-size:10.2px;line-height:10.2px;color:#5f6368;font-weight:normal;">64</div>
<div class="r" style="left:36.50px;top:173.70px;width:1.00px;height:417.30px;background:#c0c0c0;"></div>
<div class="r" style="left:0.00px;top:269.00px;width:37.00px;height:4.00px;background:#d0d0d0;"></div>
<div class="r" style="left:34.00px;top:100.00px;width:3.00px;height:74.00px;background:#c2c2c2;"></div>
<div class="r" style="left:0.00px;top:170.00px;width:37.00px;height:4.00px;background:#c2c2c2;"></div>
<div class="t" style="left:40.50px;top:180.41px;font-size:13.1px;line-height:13.1px;color:#444444;font-weight:normal;">update time</div>
<div class="t" style="left:118.80px;top:180.41px;font-size:13.1px;line-height:13.1px;color:#444444;font-weight:normal;">07/06 18h</div>
<div class="t" style="left:10.05px;width:800px;text-align:center;top:180.41px;font-size:13.1px;line-height:13.1px;color:#444444;font-weight:normal;">sum of :</div>
<div class="t" style="left:151.10px;width:800px;text-align:center;top:180.41px;font-size:13.1px;line-height:13.1px;color:#444444;font-weight:normal;">alim Gipsi</div>
<div class="t" style="left:292.10px;width:800px;text-align:center;top:180.41px;font-size:13.1px;line-height:13.1px;color:#444444;font-weight:normal;">Monday input</div>
<div class="t" style="left:526.40px;width:800px;text-align:center;top:180.41px;font-size:13.1px;line-height:13.1px;color:#111111;font-weight:bold;">December</div>
<div class="t" style="left:737.75px;width:800px;text-align:center;top:180.41px;font-size:13.1px;line-height:13.1px;color:#444444;font-weight:normal;">sum of :</div>
<div class="t" style="right:850.60px;top:200.91px;font-size:13.1px;line-height:13.1px;color:#444444;font-weight:normal;">202111</div>
<div class="t" style="right:779.50px;top:200.91px;font-size:13.1px;line-height:13.1px;color:#444444;font-weight:normal;">202111</div>
<div class="t" style="right:709.50px;top:200.91px;font-size:13.1px;line-height:13.1px;color:#444444;font-weight:normal;">202111</div>
<div class="t" style="right:638.30px;top:200.91px;font-size:13.1px;line-height:13.1px;color:#444444;font-weight:normal;">202111</div>
<div class="t" style="right:568.10px;top:200.91px;font-size:13.1px;line-height:13.1px;color:#444444;font-weight:normal;">202111</div>
<div class="t" style="right:497.50px;top:200.91px;font-size:13.1px;line-height:13.1px;color:#444444;font-weight:normal;">202111</div>
<div class="t" style="right:404.50px;top:200.91px;font-size:13.1px;line-height:13.1px;color:#444444;font-weight:normal;">202112</div>
<div class="t" style="right:334.00px;top:200.91px;font-size:13.1px;line-height:13.1px;color:#444444;font-weight:normal;">202112</div>
<div class="t" style="right:263.10px;top:200.91px;font-size:13.1px;line-height:13.1px;color:#444444;font-weight:normal;">202112</div>
<div class="t" style="right:192.70px;top:200.91px;font-size:13.1px;line-height:13.1px;color:#444444;font-weight:normal;">202112</div>
<div class="t" style="right:122.50px;top:200.91px;font-size:13.1px;line-height:13.1px;color:#444444;font-weight:normal;">202112</div>
<div class="t" style="right:51.80px;top:200.91px;font-size:13.1px;line-height:13.1px;color:#444444;font-weight:normal;">202112</div>
<div class="t" style="left:40.50px;top:253.91px;font-size:13.1px;line-height:13.1px;color:#444444;font-weight:normal;">SITE</div>
<div class="t" style="left:118.80px;top:253.91px;font-size:13.1px;line-height:13.1px;color:#444444;font-weight:normal;">POT PIC</div>
<div class="t" style="left:190.30px;top:253.91px;font-size:13.1px;line-height:13.1px;color:#444444;font-weight:normal;">Sales Type</div>
<div class="t" style="right:850.60px;top:237.11px;font-size:13.1px;line-height:13.1px;color:#111111;font-weight:bold;">NLT</div>
<div class="t" style="right:850.60px;top:253.11px;font-size:13.1px;line-height:13.1px;color:#111111;font-weight:bold;">Scenario</div>
<div class="t" style="right:779.50px;top:237.11px;font-size:13.1px;line-height:13.1px;color:#111111;font-weight:bold;">SLT</div>
<div class="t" style="right:779.50px;top:253.11px;font-size:13.1px;line-height:13.1px;color:#111111;font-weight:bold;">Scenario</div>
<div class="t" style="right:709.50px;top:221.11px;font-size:13.1px;line-height:13.1px;color:#111111;font-weight:bold;">NLT</div>
<div class="t" style="right:709.50px;top:237.11px;font-size:13.1px;line-height:13.1px;color:#111111;font-weight:bold;">Orderboo</div>
<div class="t" style="right:709.50px;top:253.11px;font-size:13.1px;line-height:13.1px;color:#111111;font-weight:bold;">k</div>
<div class="t" style="right:638.30px;top:221.11px;font-size:13.1px;line-height:13.1px;color:#111111;font-weight:bold;">SLT</div>
<div class="t" style="right:638.30px;top:237.11px;font-size:13.1px;line-height:13.1px;color:#111111;font-weight:bold;">Orderboo</div>
<div class="t" style="right:638.30px;top:253.11px;font-size:13.1px;line-height:13.1px;color:#111111;font-weight:bold;">k</div>
<div class="t" style="right:568.10px;top:237.11px;font-size:13.1px;line-height:13.1px;color:#111111;font-weight:bold;">Remain to</div>
<div class="t" style="right:568.10px;top:253.11px;font-size:13.1px;line-height:13.1px;color:#111111;font-weight:bold;">book NLT</div>
<div class="t" style="right:497.50px;top:237.11px;font-size:13.1px;line-height:13.1px;color:#111111;font-weight:bold;">Remain to</div>
<div class="t" style="right:497.50px;top:253.11px;font-size:13.1px;line-height:13.1px;color:#111111;font-weight:bold;">book SLT</div>
<div class="t" style="right:404.50px;top:253.11px;font-size:13.1px;line-height:13.1px;color:#111111;font-weight:bold;">Budget</div>
<div class="t" style="right:334.00px;top:253.11px;font-size:13.1px;line-height:13.1px;color:#111111;font-weight:bold;">Sales Plan</div>
<div class="t" style="right:263.10px;top:221.11px;font-size:13.1px;line-height:13.1px;color:#111111;font-weight:bold;">ASE</div>
<div class="t" style="right:263.10px;top:237.11px;font-size:13.1px;line-height:13.1px;color:#111111;font-weight:bold;">Demand</div>
<div class="t" style="right:263.10px;top:253.11px;font-size:13.1px;line-height:13.1px;color:#111111;font-weight:bold;">Scenario</div>
<div class="t" style="right:192.70px;top:221.11px;font-size:13.1px;line-height:13.1px;color:#111111;font-weight:bold;">incl.</div>
<div class="t" style="right:192.70px;top:237.11px;font-size:13.1px;line-height:13.1px;color:#111111;font-weight:bold;">Remain to</div>
<div class="t" style="right:192.70px;top:253.11px;font-size:13.1px;line-height:13.1px;color:#111111;font-weight:bold;">book</div>
<div class="t" style="right:122.50px;top:237.11px;font-size:13.1px;line-height:13.1px;color:#111111;font-weight:bold;">NLT</div>
<div class="t" style="right:122.50px;top:253.11px;font-size:13.1px;line-height:13.1px;color:#111111;font-weight:bold;">Scenario</div>
<div class="t" style="right:51.80px;top:237.11px;font-size:13.1px;line-height:13.1px;color:#111111;font-weight:bold;">SLT</div>
<div class="t" style="right:51.80px;top:253.11px;font-size:13.1px;line-height:13.1px;color:#111111;font-weight:bold;">Scenario</div>
<div class="t" style="left:40.50px;top:279.21px;font-size:13.1px;line-height:13.1px;color:#111111;font-weight:bold;">ISB</div>
<div class="t" style="left:-248.95px;width:800px;text-align:center;top:279.21px;font-size:13.1px;line-height:13.1px;color:#111111;font-weight:bold;">2B</div>
<div class="t" style="left:190.30px;top:279.21px;font-size:13.1px;line-height:13.1px;color:#111111;font-weight:bold;">TOTAL</div>
<div class="t" style="right:850.60px;top:279.21px;font-size:13.1px;line-height:13.1px;color:#111111;font-weight:bold;">9,455</div>
<div class="t" style="right:779.50px;top:279.21px;font-size:13.1px;line-height:13.1px;color:#111111;font-weight:bold;">13,900</div>
<div class="t" style="right:709.50px;top:279.21px;font-size:13.1px;line-height:13.1px;color:#111111;font-weight:bold;">1,343</div>
<div class="t" style="right:638.30px;top:279.21px;font-size:13.1px;line-height:13.1px;color:#111111;font-weight:bold;">0</div>
<div class="t" style="right:568.10px;top:279.21px;font-size:13.1px;line-height:13.1px;color:#111111;font-weight:bold;">8,112</div>
<div class="t" style="right:497.50px;top:279.21px;font-size:13.1px;line-height:13.1px;color:#111111;font-weight:bold;">13,900</div>
<div class="t" style="right:404.50px;top:279.21px;font-size:13.1px;line-height:13.1px;color:#111111;font-weight:bold;">17,574</div>
<div class="t" style="right:334.00px;top:279.21px;font-size:13.1px;line-height:13.1px;color:#111111;font-weight:bold;">19,173</div>
<div class="t" style="right:263.10px;top:279.21px;font-size:13.1px;line-height:13.1px;color:#111111;font-weight:bold;">19,173</div>
<div class="t" style="right:192.70px;top:279.21px;font-size:13.1px;line-height:13.1px;color:#111111;font-weight:bold;">18,507</div>
<div class="t" style="right:122.50px;top:279.21px;font-size:13.1px;line-height:13.1px;color:#111111;font-weight:bold;">7,673</div>
<div class="t" style="right:51.80px;top:279.21px;font-size:13.1px;line-height:13.1px;color:#111111;font-weight:bold;">11,500</div>
<div class="t" style="left:190.30px;top:300.41px;font-size:13.1px;line-height:13.1px;color:#444444;font-weight:normal;">Sales to end-users</div>
<div class="t" style="right:850.60px;top:300.41px;font-size:13.1px;line-height:13.1px;color:#444444;font-weight:normal;">1,999</div>
<div class="t" style="right:779.50px;top:300.41px;font-size:13.1px;line-height:13.1px;color:#444444;font-weight:normal;">900</div>
<div class="t" style="right:709.50px;top:300.41px;font-size:13.1px;line-height:13.1px;color:#444444;font-weight:normal;">279</div>
<div class="t" style="right:638.30px;top:300.41px;font-size:13.1px;line-height:13.1px;color:#444444;font-weight:normal;">0</div>
<div class="t" style="right:568.10px;top:300.41px;font-size:13.1px;line-height:13.1px;color:#444444;font-weight:normal;">1,720</div>
<div class="t" style="right:497.50px;top:300.41px;font-size:13.1px;line-height:13.1px;color:#444444;font-weight:normal;">900</div>
<div class="t" style="right:404.50px;top:300.41px;font-size:13.1px;line-height:13.1px;color:#444444;font-weight:normal;">2,656</div>
<div class="t" style="right:334.00px;top:300.41px;font-size:13.1px;line-height:13.1px;color:#444444;font-weight:normal;">2,107</div>
<div class="t" style="right:263.10px;top:300.41px;font-size:13.1px;line-height:13.1px;color:#444444;font-weight:normal;">2,107</div>
<div class="t" style="right:192.70px;top:300.41px;font-size:13.1px;line-height:13.1px;color:#444444;font-weight:normal;">2,085</div>
<div class="t" style="right:122.50px;top:300.41px;font-size:13.1px;line-height:13.1px;color:#444444;font-weight:normal;">1,207</div>
<div class="t" style="right:51.80px;top:300.41px;font-size:13.1px;line-height:13.1px;color:#444444;font-weight:normal;">900</div>
<div class="t" style="left:190.30px;top:321.61px;font-size:13.1px;line-height:13.1px;color:#444444;font-weight:normal;">Semi-directs supplies</div>
<div class="t" style="right:850.60px;top:321.61px;font-size:13.1px;line-height:13.1px;color:#444444;font-weight:normal;">2,026</div>
<div class="t" style="right:779.50px;top:321.61px;font-size:13.1px;line-height:13.1px;color:#444444;font-weight:normal;">2,200</div>
<div class="t" style="right:709.50px;top:321.61px;font-size:13.1px;line-height:13.1px;color:#444444;font-weight:normal;">0</div>
<div class="t" style="right:638.30px;top:321.61px;font-size:13.1px;line-height:13.1px;color:#444444;font-weight:normal;">0</div>
<div class="t" style="right:568.10px;top:321.61px;font-size:13.1px;line-height:13.1px;color:#444444;font-weight:normal;">2,026</div>
<div class="t" style="right:497.50px;top:321.61px;font-size:13.1px;line-height:13.1px;color:#444444;font-weight:normal;">2,200</div>
<div class="t" style="right:404.50px;top:321.61px;font-size:13.1px;line-height:13.1px;color:#444444;font-weight:normal;">3,254</div>
<div class="t" style="right:334.00px;top:321.61px;font-size:13.1px;line-height:13.1px;color:#444444;font-weight:normal;">3,812</div>
<div class="t" style="right:263.10px;top:321.61px;font-size:13.1px;line-height:13.1px;color:#444444;font-weight:normal;">3,812</div>
<div class="t" style="right:192.70px;top:321.61px;font-size:13.1px;line-height:13.1px;color:#444444;font-weight:normal;">3,812</div>
<div class="t" style="right:122.50px;top:321.61px;font-size:13.1px;line-height:13.1px;color:#444444;font-weight:normal;">1,612</div>
<div class="t" style="right:51.80px;top:321.61px;font-size:13.1px;line-height:13.1px;color:#444444;font-weight:normal;">2,200</div>
<div class="t" style="left:190.30px;top:342.81px;font-size:13.1px;line-height:13.1px;color:#444444;font-weight:normal;">Sales to Indep</div>
<div class="t" style="right:850.60px;top:342.81px;font-size:13.1px;line-height:13.1px;color:#444444;font-weight:normal;">2,790</div>
<div class="t" style="right:779.50px;top:342.81px;font-size:13.1px;line-height:13.1px;color:#444444;font-weight:normal;">0</div>
<div class="t" style="right:709.50px;top:342.81px;font-size:13.1px;line-height:13.1px;color:#444444;font-weight:normal;">1,044</div>
<div class="t" style="right:638.30px;top:342.81px;font-size:13.1px;line-height:13.1px;color:#444444;font-weight:normal;">0</div>
<div class="t" style="right:568.10px;top:342.81px;font-size:13.1px;line-height:13.1px;color:#444444;font-weight:normal;">1,746</div>
<div class="t" style="right:404.50px;top:342.81px;font-size:13.1px;line-height:13.1px;color:#444444;font-weight:normal;">3,226</div>
<div class="t" style="right:334.00px;top:342.81px;font-size:13.1px;line-height:13.1px;color:#444444;font-weight:normal;">3,270</div>
<div class="t" style="right:263.10px;top:342.81px;font-size:13.1px;line-height:13.1px;color:#444444;font-weight:normal;">3,270</div>
<div class="t" style="right:192.70px;top:342.81px;font-size:13.1px;line-height:13.1px;color:#444444;font-weight:normal;">2,646</div>
<div class="t" style="right:122.50px;top:342.81px;font-size:13.1px;line-height:13.1px;color:#444444;font-weight:normal;">3,270</div>
<div class="t" style="right:51.80px;top:342.81px;font-size:13.1px;line-height:13.1px;color:#444444;font-weight:normal;">0</div>
<div class="t" style="left:190.30px;top:364.01px;font-size:13.1px;line-height:13.1px;color:#444444;font-weight:normal;">S&S distrib supplies</div>
<div class="t" style="right:850.60px;top:364.01px;font-size:13.1px;line-height:13.1px;color:#444444;font-weight:normal;">2,640</div>
<div class="t" style="right:779.50px;top:364.01px;font-size:13.1px;line-height:13.1px;color:#444444;font-weight:normal;">10,800</div>
<div class="t" style="right:709.50px;top:364.01px;font-size:13.1px;line-height:13.1px;color:#444444;font-weight:normal;">20</div>
<div class="t" style="right:638.30px;top:364.01px;font-size:13.1px;line-height:13.1px;color:#444444;font-weight:normal;">0</div>
<div class="t" style="right:568.10px;top:364.01px;font-size:13.1px;line-height:13.1px;color:#444444;font-weight:normal;">2,620</div>
<div class="t" style="right:497.50px;top:364.01px;font-size:13.1px;line-height:13.1px;color:#444444;font-weight:normal;">10,800</div>
<div class="t" style="right:404.50px;top:364.01px;font-size:13.1px;line-height:13.1px;color:#444444;font-weight:normal;">8,438</div>
<div class="t" style="right:334.00px;top:364.01px;font-size:13.1px;line-height:13.1px;color:#444444;font-weight:normal;">9,984</div>
<div class="t" style="right:263.10px;top:364.01px;font-size:13.1px;line-height:13.1px;color:#444444;font-weight:normal;">9,984</div>
<div class="t" style="right:192.70px;top:364.01px;font-size:13.1px;line-height:13.1px;color:#444444;font-weight:normal;">9,964</div>
<div class="t" style="right:122.50px;top:364.01px;font-size:13.1px;line-height:13.1px;color:#444444;font-weight:normal;">1,584</div>
<div class="t" style="right:51.80px;top:364.01px;font-size:13.1px;line-height:13.1px;color:#444444;font-weight:normal;">8,400</div>
<div class="t" style="left:40.50px;top:406.41px;font-size:13.1px;line-height:13.1px;color:#111111;font-weight:bold;">TOTAL</div>
<div class="t" style="left:-248.95px;width:800px;text-align:center;top:406.41px;font-size:13.1px;line-height:13.1px;color:#111111;font-weight:bold;">BA</div>
<div class="t" style="left:190.30px;top:406.41px;font-size:13.1px;line-height:13.1px;color:#111111;font-weight:bold;">TOTAL</div>
<div class="t" style="right:850.60px;top:406.41px;font-size:13.1px;line-height:13.1px;color:#111111;font-weight:bold;">14,106</div>
<div class="t" style="right:779.50px;top:406.41px;font-size:13.1px;line-height:13.1px;color:#111111;font-weight:bold;">3,900</div>
<div class="t" style="right:709.50px;top:406.41px;font-size:13.1px;line-height:13.1px;color:#111111;font-weight:bold;">3,878</div>
<div class="t" style="right:638.30px;top:406.41px;font-size:13.1px;line-height:13.1px;color:#111111;font-weight:bold;">80</div>
<div class="t" style="right:568.10px;top:406.41px;font-size:13.1px;line-height:13.1px;color:#111111;font-weight:bold;">10,229</div>
<div class="t" style="right:497.50px;top:406.41px;font-size:13.1px;line-height:13.1px;color:#111111;font-weight:bold;">3,820</div>
<div class="t" style="right:404.50px;top:406.41px;font-size:13.1px;line-height:13.1px;color:#111111;font-weight:bold;">11,480</div>
<div class="t" style="right:334.00px;top:406.41px;font-size:13.1px;line-height:13.1px;color:#111111;font-weight:bold;">14,267</div>
<div class="t" style="right:263.10px;top:406.41px;font-size:13.1px;line-height:13.1px;color:#111111;font-weight:bold;">14,267</div>
<div class="t" style="right:192.70px;top:406.41px;font-size:13.1px;line-height:13.1px;color:#111111;font-weight:bold;">13,297</div>
<div class="t" style="right:122.50px;top:406.41px;font-size:13.1px;line-height:13.1px;color:#111111;font-weight:bold;">10,967</div>
<div class="t" style="right:51.80px;top:406.41px;font-size:13.1px;line-height:13.1px;color:#111111;font-weight:bold;">3,300</div>
<div class="t" style="left:190.30px;top:427.61px;font-size:13.1px;line-height:13.1px;color:#444444;font-weight:normal;">Sales to end-users</div>
<div class="t" style="right:850.60px;top:427.61px;font-size:13.1px;line-height:13.1px;color:#444444;font-weight:normal;">6,047</div>
<div class="t" style="right:779.50px;top:427.61px;font-size:13.1px;line-height:13.1px;color:#444444;font-weight:normal;">400</div>
<div class="t" style="right:709.50px;top:427.61px;font-size:13.1px;line-height:13.1px;color:#444444;font-weight:normal;">2,614</div>
<div class="t" style="right:638.30px;top:427.61px;font-size:13.1px;line-height:13.1px;color:#444444;font-weight:normal;">0</div>
<div class="t" style="right:568.10px;top:427.61px;font-size:13.1px;line-height:13.1px;color:#444444;font-weight:normal;">3,433</div>
<div class="t" style="right:497.50px;top:427.61px;font-size:13.1px;line-height:13.1px;color:#444444;font-weight:normal;">400</div>
<div class="t" style="right:404.50px;top:427.61px;font-size:13.1px;line-height:13.1px;color:#444444;font-weight:normal;">4,055</div>
<div class="t" style="right:334.00px;top:427.61px;font-size:13.1px;line-height:13.1px;color:#444444;font-weight:normal;">5,505</div>
<div class="t" style="right:263.10px;top:427.61px;font-size:13.1px;line-height:13.1px;color:#444444;font-weight:normal;">5,505</div>
<div class="t" style="right:192.70px;top:427.61px;font-size:13.1px;line-height:13.1px;color:#444444;font-weight:normal;">4,961</div>
<div class="t" style="right:122.50px;top:427.61px;font-size:13.1px;line-height:13.1px;color:#444444;font-weight:normal;">5,105</div>
<div class="t" style="right:51.80px;top:427.61px;font-size:13.1px;line-height:13.1px;color:#444444;font-weight:normal;">400</div>
<div class="t" style="left:190.30px;top:448.81px;font-size:13.1px;line-height:13.1px;color:#444444;font-weight:normal;">Semi-directs supplies</div>
<div class="t" style="right:850.60px;top:448.81px;font-size:13.1px;line-height:13.1px;color:#444444;font-weight:normal;">1,488</div>
<div class="t" style="right:779.50px;top:448.81px;font-size:13.1px;line-height:13.1px;color:#444444;font-weight:normal;">500</div>
<div class="t" style="right:709.50px;top:448.81px;font-size:13.1px;line-height:13.1px;color:#444444;font-weight:normal;">182</div>
<div class="t" style="right:638.30px;top:448.81px;font-size:13.1px;line-height:13.1px;color:#444444;font-weight:normal;">0</div>
<div class="t" style="right:568.10px;top:448.81px;font-size:13.1px;line-height:13.1px;color:#444444;font-weight:normal;">1,306</div>
<div class="t" style="right:497.50px;top:448.81px;font-size:13.1px;line-height:13.1px;color:#444444;font-weight:normal;">500</div>
<div class="t" style="right:404.50px;top:448.81px;font-size:13.1px;line-height:13.1px;color:#444444;font-weight:normal;">1,417</div>
<div class="t" style="right:334.00px;top:448.81px;font-size:13.1px;line-height:13.1px;color:#444444;font-weight:normal;">1,688</div>
<div class="t" style="right:263.10px;top:448.81px;font-size:13.1px;line-height:13.1px;color:#444444;font-weight:normal;">1,688</div>
<div class="t" style="right:192.70px;top:448.81px;font-size:13.1px;line-height:13.1px;color:#444444;font-weight:normal;">1,644</div>
<div class="t" style="right:122.50px;top:448.81px;font-size:13.1px;line-height:13.1px;color:#444444;font-weight:normal;">1,188</div>
<div class="t" style="right:51.80px;top:448.81px;font-size:13.1px;line-height:13.1px;color:#444444;font-weight:normal;">500</div>
<div class="t" style="left:190.30px;top:470.01px;font-size:13.1px;line-height:13.1px;color:#444444;font-weight:normal;">Sales to Indep</div>
<div class="t" style="right:850.60px;top:470.01px;font-size:13.1px;line-height:13.1px;color:#444444;font-weight:normal;">1,828</div>
<div class="t" style="right:779.50px;top:470.01px;font-size:13.1px;line-height:13.1px;color:#444444;font-weight:normal;">0</div>
<div class="t" style="right:709.50px;top:470.01px;font-size:13.1px;line-height:13.1px;color:#444444;font-weight:normal;">862</div>
<div class="t" style="right:638.30px;top:470.01px;font-size:13.1px;line-height:13.1px;color:#444444;font-weight:normal;">0</div>
<div class="t" style="right:568.10px;top:470.01px;font-size:13.1px;line-height:13.1px;color:#444444;font-weight:normal;">965</div>
<div class="t" style="right:497.50px;top:470.01px;font-size:13.1px;line-height:13.1px;color:#444444;font-weight:normal;">0</div>
<div class="t" style="right:404.50px;top:470.01px;font-size:13.1px;line-height:13.1px;color:#444444;font-weight:normal;">1,574</div>
<div class="t" style="right:334.00px;top:470.01px;font-size:13.1px;line-height:13.1px;color:#444444;font-weight:normal;">1,543</div>
<div class="t" style="right:263.10px;top:470.01px;font-size:13.1px;line-height:13.1px;color:#444444;font-weight:normal;">1,543</div>
<div class="t" style="right:192.70px;top:470.01px;font-size:13.1px;line-height:13.1px;color:#444444;font-weight:normal;">1,365</div>
<div class="t" style="right:122.50px;top:470.01px;font-size:13.1px;line-height:13.1px;color:#444444;font-weight:normal;">1,543</div>
<div class="t" style="right:51.80px;top:470.01px;font-size:13.1px;line-height:13.1px;color:#444444;font-weight:normal;">0</div>
<div class="t" style="left:190.30px;top:491.21px;font-size:13.1px;line-height:13.1px;color:#444444;font-weight:normal;">S&S distrib supplies</div>
<div class="t" style="right:850.60px;top:491.21px;font-size:13.1px;line-height:13.1px;color:#444444;font-weight:normal;">4,744</div>
<div class="t" style="right:779.50px;top:491.21px;font-size:13.1px;line-height:13.1px;color:#444444;font-weight:normal;">3,000</div>
<div class="t" style="right:709.50px;top:491.21px;font-size:13.1px;line-height:13.1px;color:#444444;font-weight:normal;">220</div>
<div class="t" style="right:638.30px;top:491.21px;font-size:13.1px;line-height:13.1px;color:#444444;font-weight:normal;">80</div>
<div class="t" style="right:568.10px;top:491.21px;font-size:13.1px;line-height:13.1px;color:#444444;font-weight:normal;">4,524</div>
<div class="t" style="right:497.50px;top:491.21px;font-size:13.1px;line-height:13.1px;color:#444444;font-weight:normal;">2,920</div>
<div class="t" style="right:404.50px;top:491.21px;font-size:13.1px;line-height:13.1px;color:#444444;font-weight:normal;">4,435</div>
<div class="t" style="right:334.00px;top:491.21px;font-size:13.1px;line-height:13.1px;color:#444444;font-weight:normal;">5,531</div>
<div class="t" style="right:263.10px;top:491.21px;font-size:13.1px;line-height:13.1px;color:#444444;font-weight:normal;">5,531</div>
<div class="t" style="right:192.70px;top:491.21px;font-size:13.1px;line-height:13.1px;color:#444444;font-weight:normal;">5,328</div>
<div class="t" style="right:122.50px;top:491.21px;font-size:13.1px;line-height:13.1px;color:#444444;font-weight:normal;">3,131</div>
<div class="t" style="right:51.80px;top:491.21px;font-size:13.1px;line-height:13.1px;color:#444444;font-weight:normal;">2,400</div>
<div class="t" style="left:-248.95px;width:800px;text-align:center;top:512.41px;font-size:13.1px;line-height:13.1px;color:#111111;font-weight:bold;">2B</div>
<div class="t" style="left:190.30px;top:512.41px;font-size:13.1px;line-height:13.1px;color:#111111;font-weight:bold;">TOTAL</div>
<div class="t" style="right:850.60px;top:512.41px;font-size:13.1px;line-height:13.1px;color:#111111;font-weight:bold;">40,483</div>
<div class="t" style="right:779.50px;top:512.41px;font-size:13.1px;line-height:13.1px;color:#111111;font-weight:bold;">24,766</div>
<div class="t" style="right:709.50px;top:512.41px;font-size:13.1px;line-height:13.1px;color:#111111;font-weight:bold;">8,876</div>
<div class="t" style="right:638.30px;top:512.41px;font-size:13.1px;line-height:13.1px;color:#111111;font-weight:bold;">1,165</div>
<div class="t" style="right:568.10px;top:512.41px;font-size:13.1px;line-height:13.1px;color:#111111;font-weight:bold;">31,607</div>
<div class="t" style="right:497.50px;top:512.41px;font-size:13.1px;line-height:13.1px;color:#111111;font-weight:bold;">23,601</div>
<div class="t" style="right:404.50px;top:512.41px;font-size:13.1px;line-height:13.1px;color:#111111;font-weight:bold;">46,935</div>
<div class="t" style="right:334.00px;top:512.41px;font-size:13.1px;line-height:13.1px;color:#111111;font-weight:bold;">53,215</div>
<div class="t" style="right:263.10px;top:512.41px;font-size:13.1px;line-height:13.1px;color:#111111;font-weight:bold;">53,215</div>
<div class="t" style="right:192.70px;top:512.41px;font-size:13.1px;line-height:13.1px;color:#111111;font-weight:bold;">51,130</div>
<div class="t" style="right:122.50px;top:512.41px;font-size:13.1px;line-height:13.1px;color:#111111;font-weight:bold;">33,415</div>
<div class="t" style="right:51.80px;top:512.41px;font-size:13.1px;line-height:13.1px;color:#111111;font-weight:bold;">19,800</div>
<div class="t" style="left:190.30px;top:533.61px;font-size:13.1px;line-height:13.1px;color:#444444;font-weight:normal;">Sales to end-users</div>
<div class="t" style="right:850.60px;top:533.61px;font-size:13.1px;line-height:13.1px;color:#444444;font-weight:normal;">8,621</div>
<div class="t" style="right:779.50px;top:533.61px;font-size:13.1px;line-height:13.1px;color:#444444;font-weight:normal;">1,721</div>
<div class="t" style="right:709.50px;top:533.61px;font-size:13.1px;line-height:13.1px;color:#444444;font-weight:normal;">1,123</div>
<div class="t" style="right:638.30px;top:533.61px;font-size:13.1px;line-height:13.1px;color:#444444;font-weight:normal;">821</div>
<div class="t" style="right:568.10px;top:533.61px;font-size:13.1px;line-height:13.1px;color:#444444;font-weight:normal;">7,498</div>
<div class="t" style="right:497.50px;top:533.61px;font-size:13.1px;line-height:13.1px;color:#444444;font-weight:normal;">900</div>
<div class="t" style="right:404.50px;top:533.61px;font-size:13.1px;line-height:13.1px;color:#444444;font-weight:normal;">8,623</div>
<div class="t" style="right:334.00px;top:533.61px;font-size:13.1px;line-height:13.1px;color:#444444;font-weight:normal;">8,212</div>
<div class="t" style="right:263.10px;top:533.61px;font-size:13.1px;line-height:13.1px;color:#444444;font-weight:normal;">8,212</div>
<div class="t" style="right:192.70px;top:533.61px;font-size:13.1px;line-height:13.1px;color:#444444;font-weight:normal;">7,944</div>
<div class="t" style="right:122.50px;top:533.61px;font-size:13.1px;line-height:13.1px;color:#444444;font-weight:normal;">7,312</div>
<div class="t" style="right:51.80px;top:533.61px;font-size:13.1px;line-height:13.1px;color:#444444;font-weight:normal;">900</div>
<div class="t" style="left:190.30px;top:554.81px;font-size:13.1px;line-height:13.1px;color:#444444;font-weight:normal;">Semi-directs supplies</div>
<div class="t" style="right:850.60px;top:554.81px;font-size:13.1px;line-height:13.1px;color:#444444;font-weight:normal;">7,039</div>
<div class="t" style="right:779.50px;top:554.81px;font-size:13.1px;line-height:13.1px;color:#444444;font-weight:normal;">2,900</div>
<div class="t" style="right:709.50px;top:554.81px;font-size:13.1px;line-height:13.1px;color:#444444;font-weight:normal;">125</div>
<div class="t" style="right:638.30px;top:554.81px;font-size:13.1px;line-height:13.1px;color:#444444;font-weight:normal;">176</div>
<div class="t" style="right:568.10px;top:554.81px;font-size:13.1px;line-height:13.1px;color:#444444;font-weight:normal;">6,914</div>
<div class="t" style="right:497.50px;top:554.81px;font-size:13.1px;line-height:13.1px;color:#444444;font-weight:normal;">2,724</div>
<div class="t" style="right:404.50px;top:554.81px;font-size:13.1px;line-height:13.1px;color:#444444;font-weight:normal;">6,618</div>
<div class="t" style="right:334.00px;top:554.81px;font-size:13.1px;line-height:13.1px;color:#444444;font-weight:normal;">8,660</div>
<div class="t" style="right:263.10px;top:554.81px;font-size:13.1px;line-height:13.1px;color:#444444;font-weight:normal;">8,660</div>
<div class="t" style="right:192.70px;top:554.81px;font-size:13.1px;line-height:13.1px;color:#444444;font-weight:normal;">8,645</div>
<div class="t" style="right:122.50px;top:554.81px;font-size:13.1px;line-height:13.1px;color:#444444;font-weight:normal;">5,760</div>
<div class="t" style="right:51.80px;top:554.81px;font-size:13.1px;line-height:13.1px;color:#444444;font-weight:normal;">2,900</div>
<div class="t" style="left:190.30px;top:576.01px;font-size:13.1px;line-height:13.1px;color:#444444;font-weight:normal;">Sales to Indep</div>
<div class="t" style="right:850.60px;top:576.01px;font-size:13.1px;line-height:13.1px;color:#444444;font-weight:normal;">14,601</div>
<div class="t" style="right:779.50px;top:576.01px;font-size:13.1px;line-height:13.1px;color:#444444;font-weight:normal;">145</div>
<div class="t" style="right:709.50px;top:576.01px;font-size:13.1px;line-height:13.1px;color:#444444;font-weight:normal;">7,192</div>
<div class="t" style="right:638.30px;top:576.01px;font-size:13.1px;line-height:13.1px;color:#444444;font-weight:normal;">145</div>
<div class="t" style="right:568.10px;top:576.01px;font-size:13.1px;line-height:13.1px;color:#444444;font-weight:normal;">7,409</div>
<div class="t" style="right:497.50px;top:576.01px;font-size:13.1px;line-height:13.1px;color:#444444;font-weight:normal;">0</div>
<div class="t" style="right:404.50px;top:576.01px;font-size:13.1px;line-height:13.1px;color:#444444;font-weight:normal;">12,647</div>
<div class="t" style="right:334.00px;top:576.01px;font-size:13.1px;line-height:13.1px;color:#444444;font-weight:normal;">13,827</div>
<div class="t" style="right:263.10px;top:576.01px;font-size:13.1px;line-height:13.1px;color:#444444;font-weight:normal;">13,827</div>
<div class="t" style="right:192.70px;top:576.01px;font-size:13.1px;line-height:13.1px;color:#444444;font-weight:normal;">12,275</div>
<div class="t" style="right:122.50px;top:576.01px;font-size:13.1px;line-height:13.1px;color:#444444;font-weight:normal;">13,827</div>
<div class="t" style="right:51.80px;top:576.01px;font-size:13.1px;line-height:13.1px;color:#444444;font-weight:normal;">0</div>
<svg class="r" style="left:756.00px;top:294.70px;" width="6" height="6" viewBox="0 0 6 6"><path d="M0 0h6v6z" fill="#000"/></svg>
<svg class="r" style="left:756.00px;top:315.90px;" width="6" height="6" viewBox="0 0 6 6"><path d="M0 0h6v6z" fill="#000"/></svg>
<div class="r" style="left:114.80px;top:272.50px;width:71.50px;height:21.20px;border:1.4px solid #2b7de9;border-top:none;box-sizing:border-box"></div>
<div class="r" style="left:184.00px;top:292.00px;width:5.00px;height:4.00px;background:#1a73e8;"></div>
<svg class="r" style="left:225.50px;top:290.50px;" width="10" height="15" viewBox="0 0 10 15"><path d="M.5.5v12l3-3 2 4.5 1.8-.8-2-4.4H9.5z" fill="#fff" stroke="#000" stroke-width="0.9"/></svg>
<div class="r" style="left:1210.00px;top:287.00px;width:6.00px;height:19.00px;background:#dadce0;border-radius:3px;"></div>
<div class="r" style="left:0.00px;top:591.00px;width:1218.00px;height:11.00px;background:#ffffff;"></div>
<div class="r" style="left:0.00px;top:591.00px;width:335.00px;height:11.00px;background:#f5f6f7;"></div>
<div class="r" style="left:335.00px;top:591.00px;width:5.00px;height:11.00px;background:#e4e6ec;"></div>
<div class="r" style="left:1020.00px;top:593.00px;width:122.00px;height:7.00px;background:#dadce0;border-radius:3.5px;"></div>
<svg class="r" style="left:1184.00px;top:592.00px;" width="10" height="8" viewBox="0 0 10 8"><path d="M6 1.5L3.5 4 6 6.5" stroke="#c0c0c0" fill="none" stroke-width="1"/></svg>
<svg class="r" style="left:1196.00px;top:592.00px;" width="10" height="8" viewBox="0 0 10 8"><path d="M4 1.5L6.5 4 4 6.5" stroke="#c0c0c0" fill="none" stroke-width="1"/></svg>
<svg class="r" style="left:1209.00px;top:572.00px;" width="9" height="18" viewBox="0 0 9 18"><path d="M2.5 7L4.5 5 6.5 7M2.5 12L4.5 14 6.5 12" stroke="#c0c0c0" fill="none" stroke-width="1"/></svg>
<div class="r" style="left:0.00px;top:602.00px;width:1218.00px;height:29.00px;background:#f1f3f4;"></div>
<div class="r" style="left:0.00px;top:601.00px;width:1218.00px;height:1.00px;background:#e8eaed;"></div>
<svg class="r" style="left:29.00px;top:609.00px;" width="14" height="14" viewBox="0 0 24 24"><path d="M19 13h-6v6h-2v-6H5v-2h6V5h2v6h6v2z" fill="#5f6368"/></svg>
<svg class="r" style="left:55.00px;top:610.00px;" width="12" height="12" viewBox="0 0 12 12"><path d="M1 2h10v1.6H1zM1 5.2h10v1.6H1zM1 8.4h10V10H1z" fill="#5f6368"/></svg>
<div class="r" style="left:146.00px;top:602.00px;width:101.00px;height:29.00px;background:#ffffff;"></div>
<div class="t" style="left:97.80px;top:611.14px;font-size:12px;line-height:12px;color:#6f7378;font-weight:normal;">w23</div>
<svg class="r" style="left:126.75px;top:615.62px;" width="5.5" height="2.75" viewBox="0 0 10 5"><path d="M0 0l5 5 5-5z" fill="#6f7378"/></svg>
<div class="r" style="left:84.50px;top:628.60px;width:60.50px;height:2.40px;background:#1fe51f;"></div>
<div class="t" style="left:159.60px;top:611.14px;font-size:12px;line-height:12px;color:#3f7f68;font-weight:normal;">details w23</div>
<svg class="r" style="left:227.25px;top:615.62px;" width="5.5" height="2.75" viewBox="0 0 10 5"><path d="M0 0l5 5 5-5z" fill="#3f7f68"/></svg>
<div class="t" style="left:261.00px;top:611.14px;font-size:12px;line-height:12px;color:#6f7378;font-weight:normal;">w22</div>
<svg class="r" style="left:289.85px;top:615.62px;" width="5.5" height="2.75" viewBox="0 0 10 5"><path d="M0 0l5 5 5-5z" fill="#6f7378"/></svg>
<div class="r" style="left:247.70px;top:628.60px;width:61.10px;height:2.40px;background:#1fe51f;"></div>
<div class="t" style="left:322.00px;top:611.14px;font-size:12px;line-height:12px;color:#6f7378;font-weight:normal;">details w22</div>
<svg class="r" style="left:391.05px;top:615.62px;" width="5.5" height="2.75" viewBox="0 0 10 5"><path d="M0 0l5 5 5-5z" fill="#6f7378"/></svg>
<div class="t" style="left:423.00px;top:611.14px;font-size:12px;line-height:12px;color:#6f7378;font-weight:normal;">w21a</div>
<svg class="r" style="left:457.25px;top:615.62px;" width="5.5" height="2.75" viewBox="0 0 10 5"><path d="M0 0l5 5 5-5z" fill="#6f7378"/></svg>
<div class="r" style="left:410.70px;top:628.60px;width:64.90px;height:2.40px;background:#1fe51f;"></div>
<div class="t" style="left:490.00px;top:611.14px;font-size:12px;line-height:12px;color:#6f7378;font-weight:normal;">details w21</div>
<svg class="r" style="left:556.75px;top:615.62px;" width="5.5" height="2.75" viewBox="0 0 10 5"><path d="M0 0l5 5 5-5z" fill="#6f7378"/></svg>
<div class="t" style="left:589.00px;top:611.14px;font-size:12px;line-height:12px;color:#6f7378;font-weight:normal;">w20a</div>
<svg class="r" style="left:626.25px;top:615.62px;" width="5.5" height="2.75" viewBox="0 0 10 5"><path d="M0 0l5 5 5-5z" fill="#6f7378"/></svg>
<div class="r" style="left:575.60px;top:628.60px;width:69.80px;height:2.40px;background:#1fe51f;"></div>
<div class="t" style="left:658.80px;top:611.14px;font-size:12px;line-height:12px;color:#6f7378;font-weight:normal;">details w20</div>
<svg class="r" style="left:729.25px;top:615.62px;" width="5.5" height="2.75" viewBox="0 0 10 5"><path d="M0 0l5 5 5-5z" fill="#6f7378"/></svg>
<div class="t" style="left:762.00px;top:611.14px;font-size:12px;line-height:12px;color:#6f7378;font-weight:normal;">how to update?</div>
<svg class="r" style="left:853.05px;top:615.62px;" width="5.5" height="2.75" viewBox="0 0 10 5"><path d="M0 0l5 5 5-5z" fill="#6f7378"/></svg>
<div class="t" style="left:886.00px;top:611.14px;font-size:12px;line-height:12px;color:#6f7378;font-weight:normal;">w19a</div>
<svg class="r" style="left:920.25px;top:615.62px;" width="5.5" height="2.75" viewBox="0 0 10 5"><path d="M0 0l5 5 5-5z" fill="#6f7378"/></svg>
<div class="r" style="left:872.80px;top:628.60px;width:66.50px;height:2.40px;background:#1fe51f;"></div>
<div class="r" style="left:953.00px;top:603.00px;width:1.00px;height:28.00px;background:#dadce0;"></div>
<svg class="r" style="left:964.00px;top:611.00px;" width="8" height="10" viewBox="0 0 8 10"><path d="M6 1L2 5l4 4z" fill="#c6c6c6"/></svg>
<svg class="r" style="left:989.00px;top:611.00px;" width="8" height="10" viewBox="0 0 8 10"><path d="M2 1l4 4-4 4z" fill="#3c4043"/></svg>
<svg class="r" style="left:1186.50px;top:609.50px;" width="15" height="15.5" viewBox="0 0 15 16"><path d="M1.5 0h12A1.5 1.5 0 0 1 15 1.5v10.5a1.5 1.5 0 0 1-1.5 1.5H10l-2.5 2.5L5 13.5H1.5A1.5 1.5 0 0 1 0 12V1.5A1.5 1.5 0 0 1 1.5 0z" fill="#5f6368"/><path d="M7.5 2.5l1.2 3.3 3.3 1.2-3.3 1.2-1.2 3.3-1.2-3.3L3 7l3.3-1.2z" fill="#fff"/></svg>
</body></html>
